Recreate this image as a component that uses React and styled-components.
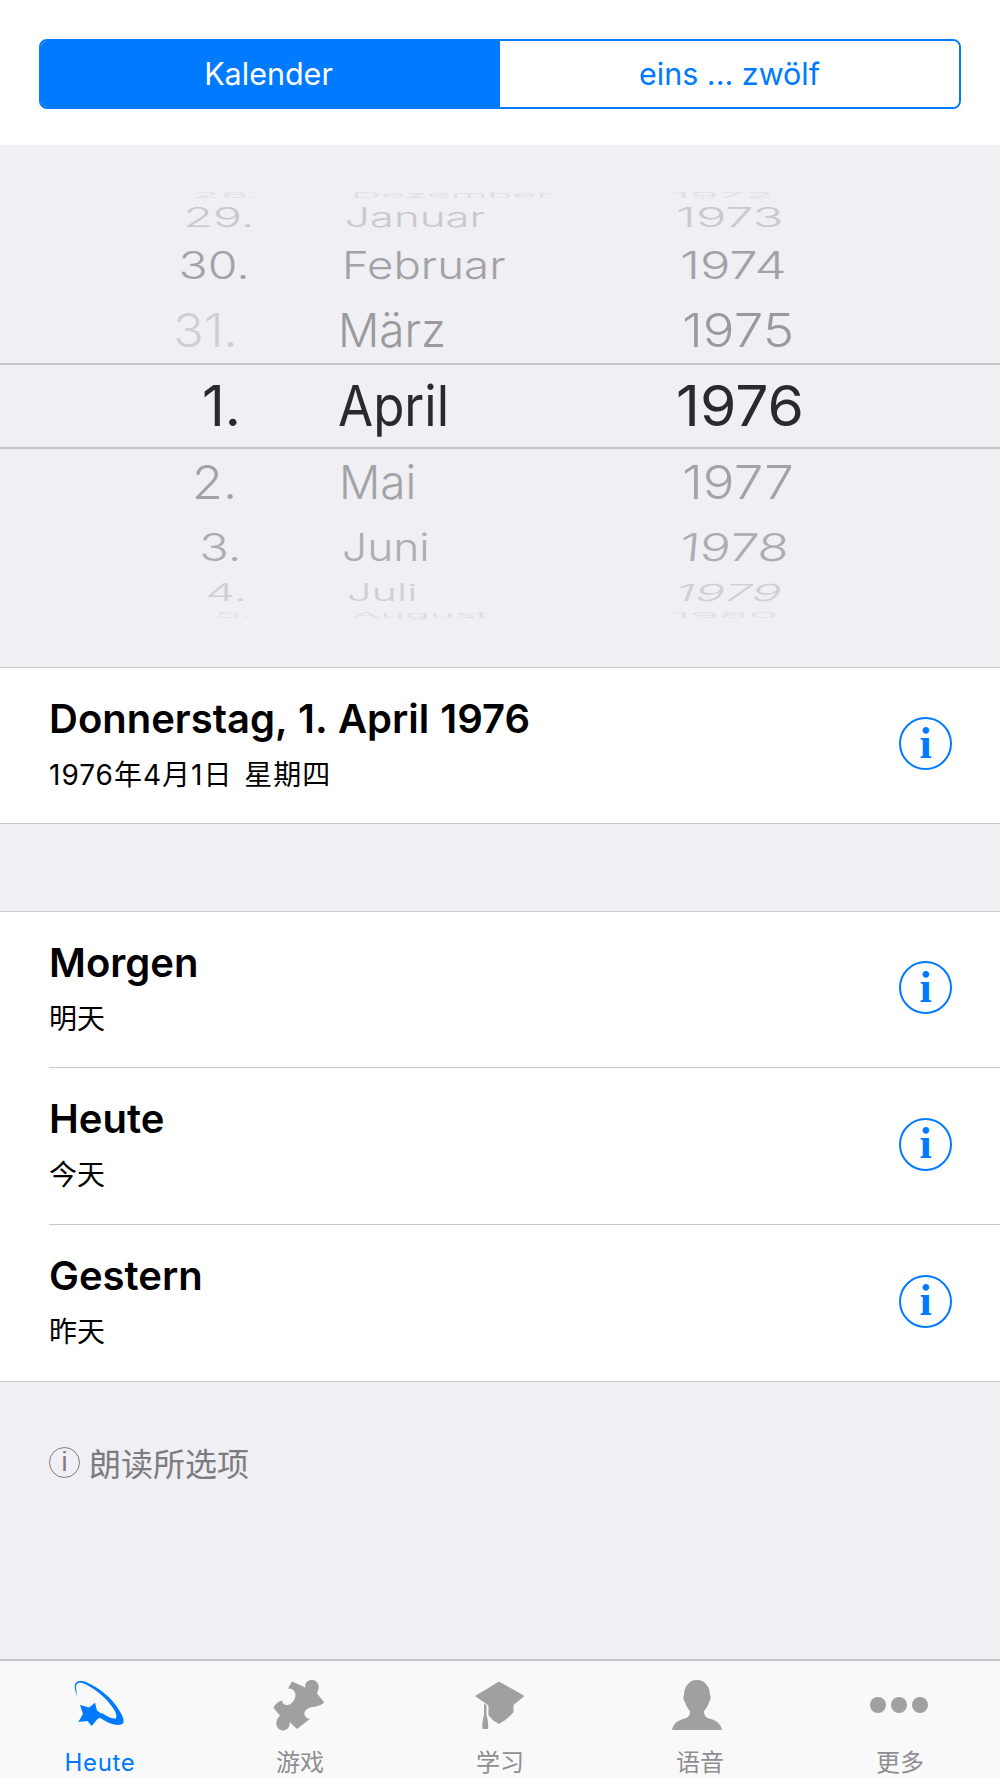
import React from 'react';
import styled, { createGlobalStyle } from 'styled-components';

const GlobalStyle = createGlobalStyle`
    html, body {
        margin: 0;
        padding: 0;
        background: #efeff4;
    }
    * {
        box-sizing: border-box;
    }
`;

const Page = styled.div`
    width: 1000px;
    height: 1778px;
    display: flex;
    flex-direction: column;
    overflow: hidden;
    background: #efeff4;
    font-family: Inter, "Noto Sans CJK SC", sans-serif;
    color: #000;
`;

const Header = styled.header`
    height: 145px;
    padding: 39px;
    background: #fff;
`;

const Segments = styled.div`
    height: 70px;
    display: grid;
    grid-template-columns: 1fr 1fr;
    border: 2px solid #007aff;
    border-radius: 8px;
    overflow: hidden;
`;

const Segment = styled.div`
    display: flex;
    align-items: center;
    justify-content: center;
    padding: 0 ${p => (p.$active ? '4px' : '0')} 2px 0;
    font-size: 30.5px;
    background: ${p => (p.$active ? '#007aff' : '#fff')};
    color: ${p => (p.$active ? '#fff' : '#007aff')};
`;

const Picker = styled.section`
    position: relative;
    height: 522px;
    padding: 45px 0 47px;
    overflow: hidden;
`;

const SelectionBand = styled.div`
    position: absolute;
    top: 218px;
    left: 0;
    right: 0;
    height: 86px;
    border-top: 2px solid #c4c4c8;
    border-bottom: 2px solid #c4c4c8;
`;

const Wheel = styled.div`
    height: 430px;
    overflow: hidden;
`;

const WheelRow = styled.div`
    height: ${p => p.$h}px;
    display: grid;
    grid-template-columns: 260px 380px 360px;
    align-items: center;
    font-size: 56px;
    line-height: 60px;
    color: ${p => p.$color};
    font-weight: ${p => (p.$selected ? 400 : 300)};
`;

const DayCell = styled.div`
    height: 60px;
    text-align: right;
    padding-right: ${p => 260 - p.$at}px;
    margin: ${p => (p.$h - 60) / 2}px 0;
`;

const MonthCell = styled.div`
    height: 60px;
    padding-left: ${p => p.$at - 260}px;
    margin: ${p => (p.$h - 60) / 2}px 0;
`;

const YearCell = styled.div`
    height: 60px;
    padding-left: ${p => p.$at - 640}px;
    margin: ${p => (p.$h - 60) / 2}px 0;
`;

const WheelText = styled.span`
    display: inline-block;
    white-space: nowrap;
    color: ${p => p.$color || 'inherit'};
    transform-origin: ${p => (p.$right ? 'right' : 'left')} center;
    transform: scale(${p => p.$sx}, ${p => p.$sy}) skewX(${p => p.$skew || 0}deg);
`;

const Section = styled.div`
    background: #fff;
    border-top: 1px solid #c8c7cc;
    border-bottom: 1px solid #c8c7cc;
`;

const Row = styled.div`
    height: ${p => p.$h || 155}px;
    display: flex;
    align-items: center;
    justify-content: space-between;
    padding-right: 48px;
    margin-left: 49px;
    border-top: ${p => (p.$divided ? '1px solid #c8c7cc' : 'none')};
`;

const RowText = styled.div`
    display: flex;
    flex-direction: column;
    gap: 15px;
    padding-bottom: 3px;
`;

const RowTitle = styled.div`
    font-size: 40px;
    line-height: 46px;
    font-weight: 600;
    word-spacing: 1px;
`;

const RowSub = styled.div`
    font-size: 28px;
    line-height: 36px;
    letter-spacing: ${p => (p.$spaced ? '1px' : '0')};
    word-spacing: ${p => (p.$spaced ? '3px' : '0')};
`;

const InfoButton = styled.span`
    width: 53px;
    height: 53px;
    margin-bottom: 4px;
    display: flex;
    align-items: center;
    justify-content: center;
    border: 2.5px solid #007aff;
    border-radius: 50%;
    color: #007aff;
    font-family: "Liberation Serif", serif;
    font-weight: 700;
    font-size: 44px;
    line-height: 1;
`;

const Gap = styled.div`
    height: 87px;
`;

const SpeakRow = styled.div`
    display: flex;
    align-items: center;
    gap: 9px;
    margin: 58px 0 0 49px;
    height: 44px;
    color: #7c7c80;
    font-size: 32px;
`;

const SpeakIcon = styled.span`
    width: 31px;
    height: 31px;
    display: flex;
    align-items: center;
    justify-content: center;
    border: 1.5px solid #7c7c80;
    border-radius: 50%;
    font-family: "Liberation Sans", sans-serif;
    font-size: 27px;
    line-height: 1;
`;

const Spacer = styled.div`
    flex: 1;
`;

const TabBar = styled.nav`
    height: 119px;
    flex: none;
    display: grid;
    grid-template-columns: repeat(5, 1fr);
    padding-top: 17px;
    background: #f9f9f9;
    border-top: 2px solid #c4c4c8;
`;

const Tab = styled.div`
    display: flex;
    flex-direction: column;
    align-items: center;
    color: ${p => (p.$active ? '#007aff' : '#8e8e93')};
`;

const TabIcon = styled.svg`
    width: 56px;
    height: 56px;
    overflow: visible;
    fill: ${p => (p.$active ? '#007aff' : '#a0a0a0')};
`;

const TabLabel = styled.span`
    margin-top: 13px;
    font-size: 24px;
    line-height: 32px;
    letter-spacing: ${p => (p.$active ? '0.7px' : '0')};
`;

const monthFit = 0.91;
const yearFit = 1.05;

const wheel = [
    { day: '28.', month: 'Dezember', year: '1972', h: 10, dayAt: 260, monthAt: 351, yearAt: 671, sx: 0.82, sy: 0.14, color: '#dfdfe3' },
    { day: '29.', month: 'Januar', year: '1973', h: 36, dayAt: 254, monthAt: 345, yearAt: 676, sx: 0.86, sy: 0.47, color: '#c9c9cd' },
    { day: '30.', month: 'Februar', year: '1974', h: 58, dayAt: 250, monthAt: 342, yearAt: 680, sx: 0.86, sy: 0.68, color: '#a2a2a6', monthStretch: 1.04 },
    { day: '31.', month: 'März', year: '1975', h: 72, dayAt: 238, monthAt: 338, yearAt: 682, sx: 0.9, sy: 0.84, color: '#9a9a9e', dayColor: '#cfcfd3' },
    { day: '1.', month: 'April', year: '1976', h: 80, dayAt: 241, monthAt: 338, yearAt: 676, sx: 1, sy: 1, color: '#2a2a2c', selected: true },
    { day: '2.', month: 'Mai', year: '1977', h: 72, dayAt: 237, monthAt: 339, yearAt: 682, sx: 0.9, sy: 0.84, color: '#a3a3a7' },
    { day: '3.', month: 'Juni', year: '1978', h: 58, dayAt: 241, monthAt: 342, yearAt: 680, sx: 0.87, sy: 0.68, color: '#adadb1', yearSkew: -4 },
    { day: '4.', month: 'Juli', year: '1979', h: 34, dayAt: 247, monthAt: 347, yearAt: 676, sx: 0.85, sy: 0.42, color: '#d0d0d4', yearSkew: -10 },
    { day: '5.', month: 'August', year: '1980', h: 10, dayAt: 254, monthAt: 352, yearAt: 671, sx: 0.82, sy: 0.14, color: '#dfdfe3' },
];

const StarIcon = ({ active }) => (
    <TabIcon $active={active} viewBox="0 0 56 56">
        <path d="M5.5 19 C3 13 2 8 3.5 5.5 C5 2.5 10 2.5 15 4.5 C27 9.5 40 20 47 32 C51 38 52.5 43 51 45.5 C48 48 42 47 36 44.5 L28 40 L30 35 C35 38.5 40 41 44 40.5 C45 38 44 34 41 30 C35 21 25 12 14 6.5 C10 4.5 6 4 4.5 6.5 C3.5 9 4.5 14 5.5 19 Z" />
        <path d="M8 27 L17 29.5 L23 24.7 L25 32.5 L32 37.5 L25.5 41 L19.7 48 L15.5 43 L6.3 44 L11 36 Z" />
    </TabIcon>
);

const PuzzleIcon = () => (
    <TabIcon viewBox="0 0 56 56">
        <path d="M20 3.5 L33.5 9.5 C32 4 37 1.5 41 2 C46 3 48 8 46 12.5 C45.5 14 45 15 45 15.5 L52 24 C52 26 46 28 42 29 C37 29 33 31.5 32.5 35 C32 38.5 35.5 41.5 38.5 40.5 L25 51 L17.5 44 C18.5 49 15 53 10.5 52.5 C5.5 52 3 46.5 5 42 C5.5 40.5 7 38.5 8 37.5 L1.5 30 C3 26 6 23.5 10 22.5 C10.5 25 12 27 14.5 27 C19 27.5 23.5 22 23.5 17 C23.5 13 20 10 16 10.5 Z" />
    </TabIcon>
);

const CapIcon = () => (
    <TabIcon viewBox="0 0 56 56">
        <path d="M27 3.5 L52.5 18 L41.5 27 V34 C38 39 32 43 27 46 C23 44 19 41 16.5 37 V27.5 L3 18 Z" />
        <path d="M12 26 L14.5 27 L14.5 37 C16 42 16.5 47 16 51 H10.5 C10 47 10.5 42 12 37 Z" />
    </TabIcon>
);

const PersonIcon = () => (
    <TabIcon viewBox="0 0 56 56">
        <path d="M25 2 C34 2 38 10 38 17 C39 18 39 22 37 24 C36 28 34 31 32 33 C32 38 34 40 39 41 C45 43 49 46 50 52 H0 C1 46 5 43 11 41 C16 40 18 38 18 33 C16 31 14 28 13 24 C11 22 11 18 12 17 C12 10 16 2 25 2 Z" />
    </TabIcon>
);

const DotsIcon = () => (
    <TabIcon viewBox="0 0 56 56">
        <circle cx="6" cy="27" r="8" />
        <circle cx="27" cy="27" r="8" />
        <circle cx="48" cy="27" r="8" />
    </TabIcon>
);

const tabs = [
    { label: 'Heute', Icon: StarIcon, active: true },
    { label: '游戏', Icon: PuzzleIcon },
    { label: '学习', Icon: CapIcon },
    { label: '语音', Icon: PersonIcon },
    { label: '更多', Icon: DotsIcon },
];

const rows = [
    { title: 'Morgen', sub: '明天' },
    { title: 'Heute', sub: '今天' },
    { title: 'Gestern', sub: '昨天' },
];

export default function App() {
    return (
        <Page>
            <GlobalStyle />
            <Header>
                <Segments>
                    <Segment $active>Kalender</Segment>
                    <Segment>eins ... zwölf</Segment>
                </Segments>
            </Header>
            <Picker>
                <Wheel>
                    {wheel.map(r => (
                        <WheelRow key={r.day} $h={r.h} $color={r.color} $selected={r.selected}>
                            <DayCell $at={r.dayAt} $h={r.h}>
                                <WheelText $right $sx={r.sx} $sy={r.sy} $color={r.dayColor}>{r.day}</WheelText>
                            </DayCell>
                            <MonthCell $at={r.monthAt} $h={r.h}>
                                <WheelText $sx={r.sx * monthFit * (r.monthStretch || 1)} $sy={r.sy}>{r.month}</WheelText>
                            </MonthCell>
                            <YearCell $at={r.yearAt} $h={r.h}>
                                <WheelText $sx={r.sx * yearFit} $sy={r.sy} $skew={r.yearSkew}>{r.year}</WheelText>
                            </YearCell>
                        </WheelRow>
                    ))}
                </Wheel>
                <SelectionBand />
            </Picker>
            <Section>
                <Row>
                    <RowText>
                        <RowTitle>Donnerstag, 1. April 1976</RowTitle>
                        <RowSub $spaced>1976年4月1日 星期四</RowSub>
                    </RowText>
                    <InfoButton>i</InfoButton>
                </Row>
            </Section>
            <Gap />
            <Section>
                {rows.map((r, i) => (
                    <Row key={r.title} $divided={i > 0} $h={i > 0 ? 157 : 155}>
                        <RowText>
                            <RowTitle>{r.title}</RowTitle>
                            <RowSub>{r.sub}</RowSub>
                        </RowText>
                        <InfoButton>i</InfoButton>
                    </Row>
                ))}
            </Section>
            <SpeakRow>
                <SpeakIcon>i</SpeakIcon>
                朗读所选项
            </SpeakRow>
            <Spacer />
            <TabBar>
                {tabs.map(({ label, Icon, active }) => (
                    <Tab key={label} $active={active}>
                        <Icon active={active} />
                        <TabLabel $active={active}>{label}</TabLabel>
                    </Tab>
                ))}
            </TabBar>
        </Page>
    );
}
